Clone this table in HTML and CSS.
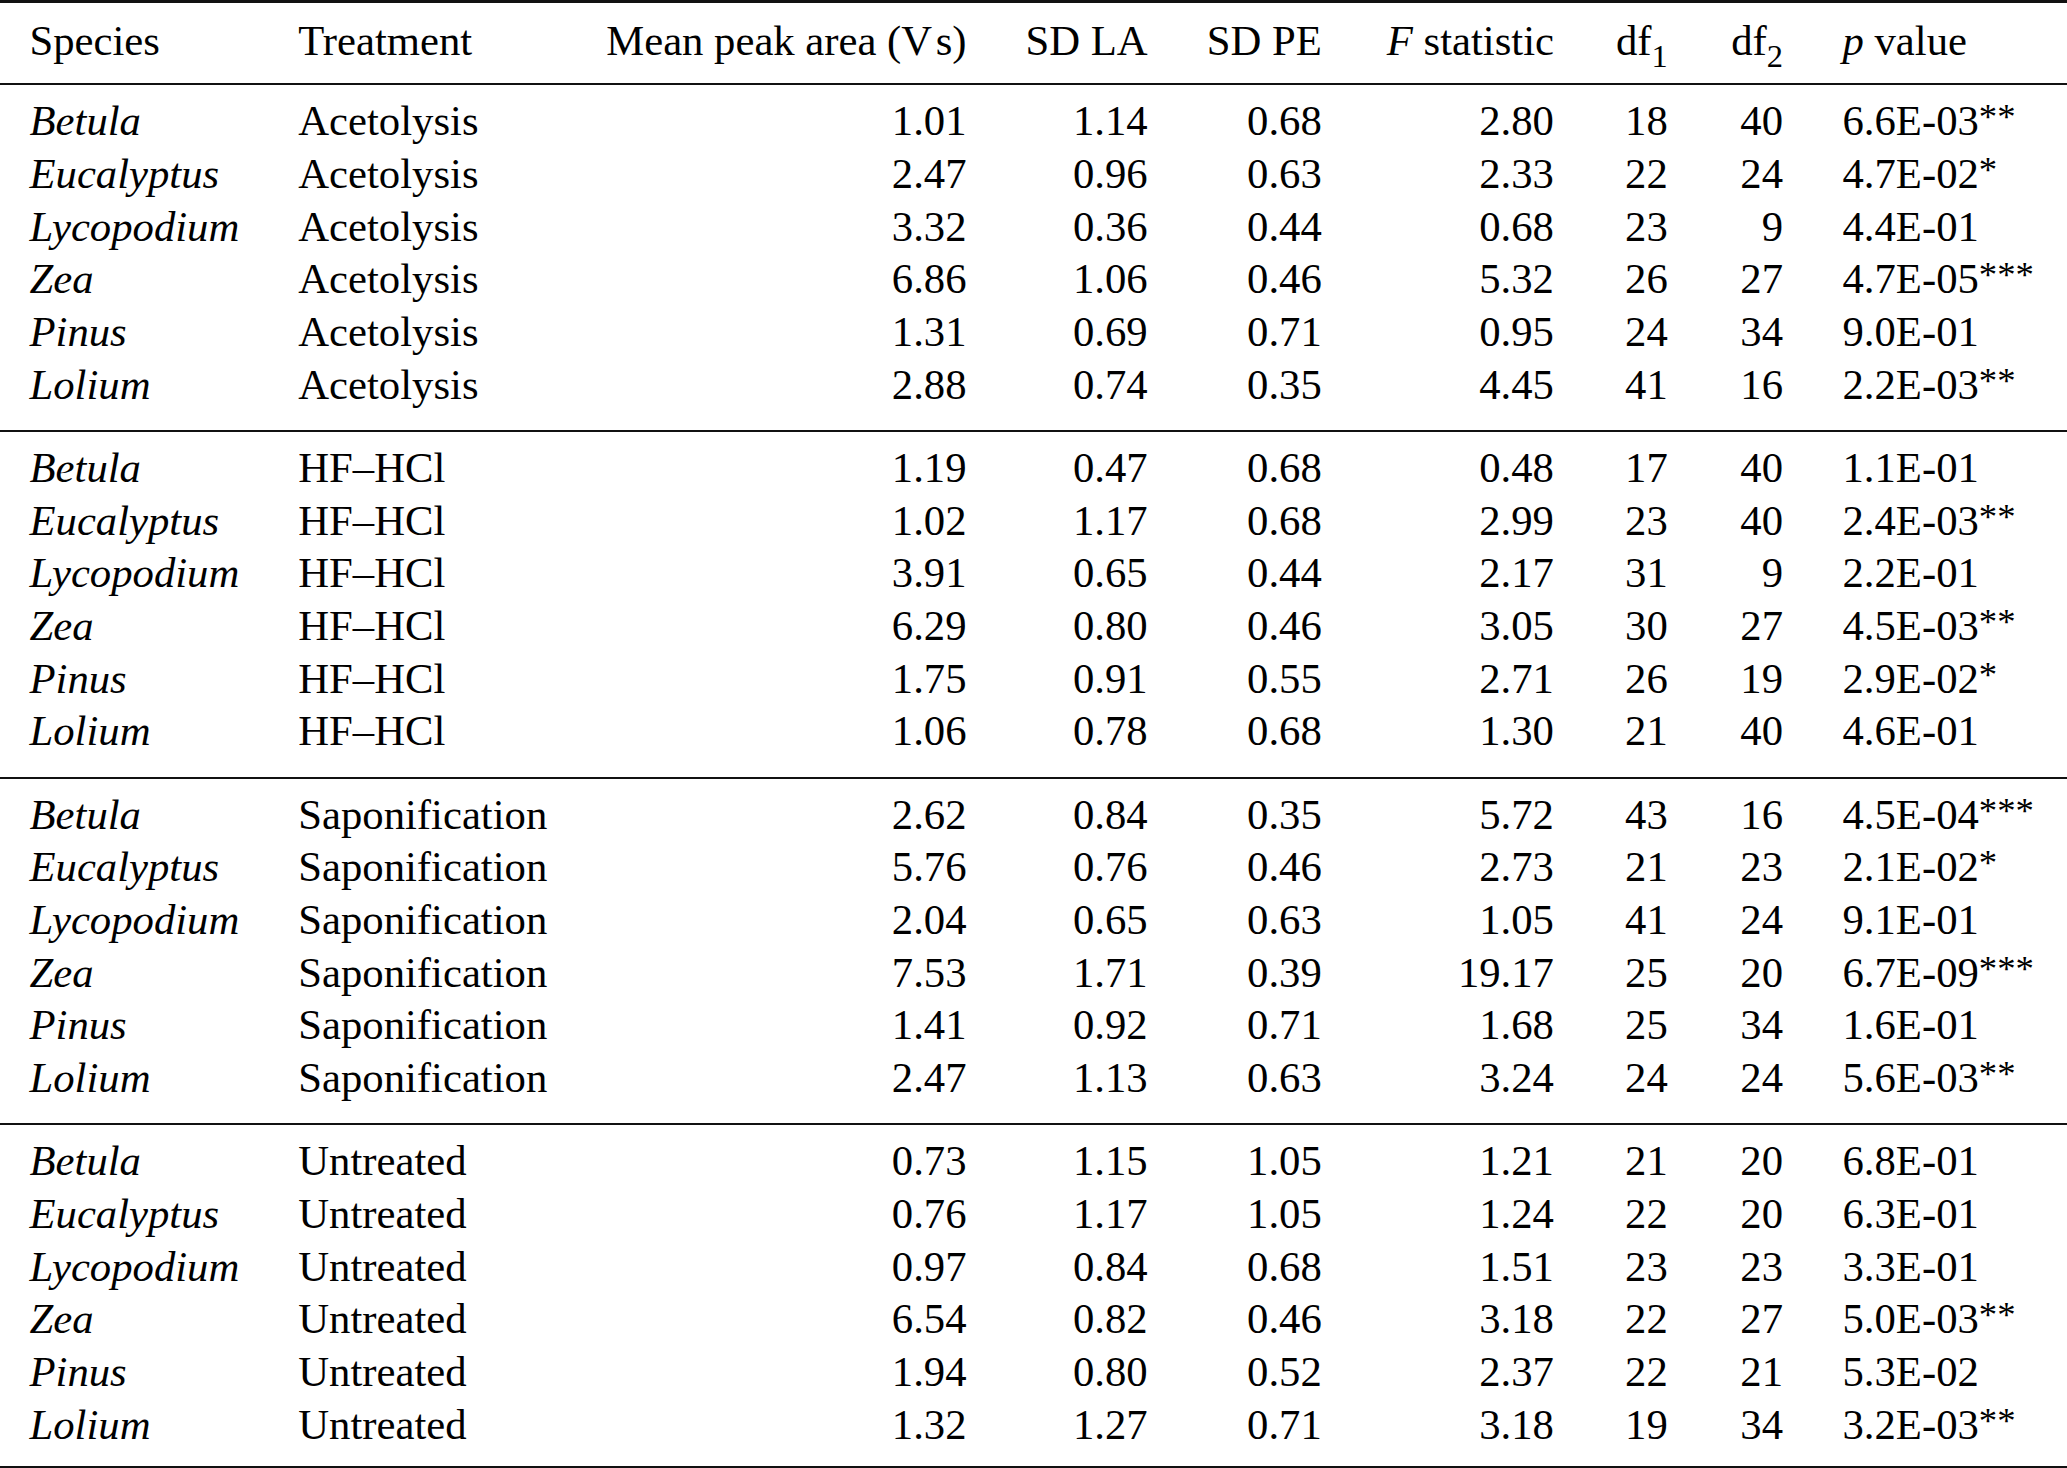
FILE: index.html
```html
<!DOCTYPE html>
<html lang="en">
<head>
<meta charset="utf-8">
<title>Peak area statistics</title>
<link rel="stylesheet" href="styles.css">
</head>
<body>
<div class="sheet">
<table class="stats">
<thead>
<tr>
<th>Species</th><th>Treatment</th><th>Mean peak area (<span class="vs">V&#8202;s</span>)</th><th>SD LA</th><th>SD PE</th><th><i>F</i> statistic</th><th>df<sub class="ix">1</sub></th><th>df<sub class="ix">2</sub></th><th class="pv"><i>p</i> value</th>
</tr>
</thead>
<tbody>
<tr><td>Betula</td><td>Acetolysis</td><td>1.01</td><td>1.14</td><td>0.68</td><td>2.80</td><td>18</td><td>40</td><td>6.6E-03<sup class="st">**</sup></td></tr>
<tr><td>Eucalyptus</td><td>Acetolysis</td><td>2.47</td><td>0.96</td><td>0.63</td><td>2.33</td><td>22</td><td>24</td><td>4.7E-02<sup class="st">*</sup></td></tr>
<tr><td>Lycopodium</td><td>Acetolysis</td><td>3.32</td><td>0.36</td><td>0.44</td><td>0.68</td><td>23</td><td>9</td><td>4.4E-01</td></tr>
<tr><td>Zea</td><td>Acetolysis</td><td>6.86</td><td>1.06</td><td>0.46</td><td>5.32</td><td>26</td><td>27</td><td>4.7E-05<sup class="st">***</sup></td></tr>
<tr><td>Pinus</td><td>Acetolysis</td><td>1.31</td><td>0.69</td><td>0.71</td><td>0.95</td><td>24</td><td>34</td><td>9.0E-01</td></tr>
<tr><td>Lolium</td><td>Acetolysis</td><td>2.88</td><td>0.74</td><td>0.35</td><td>4.45</td><td>41</td><td>16</td><td>2.2E-03<sup class="st">**</sup></td></tr>
</tbody>
<tbody>
<tr><td>Betula</td><td>HF–HCl</td><td>1.19</td><td>0.47</td><td>0.68</td><td>0.48</td><td>17</td><td>40</td><td>1.1E-01</td></tr>
<tr><td>Eucalyptus</td><td>HF–HCl</td><td>1.02</td><td>1.17</td><td>0.68</td><td>2.99</td><td>23</td><td>40</td><td>2.4E-03<sup class="st">**</sup></td></tr>
<tr><td>Lycopodium</td><td>HF–HCl</td><td>3.91</td><td>0.65</td><td>0.44</td><td>2.17</td><td>31</td><td>9</td><td>2.2E-01</td></tr>
<tr><td>Zea</td><td>HF–HCl</td><td>6.29</td><td>0.80</td><td>0.46</td><td>3.05</td><td>30</td><td>27</td><td>4.5E-03<sup class="st">**</sup></td></tr>
<tr><td>Pinus</td><td>HF–HCl</td><td>1.75</td><td>0.91</td><td>0.55</td><td>2.71</td><td>26</td><td>19</td><td>2.9E-02<sup class="st">*</sup></td></tr>
<tr><td>Lolium</td><td>HF–HCl</td><td>1.06</td><td>0.78</td><td>0.68</td><td>1.30</td><td>21</td><td>40</td><td>4.6E-01</td></tr>
</tbody>
<tbody>
<tr><td>Betula</td><td>Saponification</td><td>2.62</td><td>0.84</td><td>0.35</td><td>5.72</td><td>43</td><td>16</td><td>4.5E-04<sup class="st">***</sup></td></tr>
<tr><td>Eucalyptus</td><td>Saponification</td><td>5.76</td><td>0.76</td><td>0.46</td><td>2.73</td><td>21</td><td>23</td><td>2.1E-02<sup class="st">*</sup></td></tr>
<tr><td>Lycopodium</td><td>Saponification</td><td>2.04</td><td>0.65</td><td>0.63</td><td>1.05</td><td>41</td><td>24</td><td>9.1E-01</td></tr>
<tr><td>Zea</td><td>Saponification</td><td>7.53</td><td>1.71</td><td>0.39</td><td>19.17</td><td>25</td><td>20</td><td>6.7E-09<sup class="st">***</sup></td></tr>
<tr><td>Pinus</td><td>Saponification</td><td>1.41</td><td>0.92</td><td>0.71</td><td>1.68</td><td>25</td><td>34</td><td>1.6E-01</td></tr>
<tr><td>Lolium</td><td>Saponification</td><td>2.47</td><td>1.13</td><td>0.63</td><td>3.24</td><td>24</td><td>24</td><td>5.6E-03<sup class="st">**</sup></td></tr>
</tbody>
<tbody>
<tr><td>Betula</td><td>Untreated</td><td>0.73</td><td>1.15</td><td>1.05</td><td>1.21</td><td>21</td><td>20</td><td>6.8E-01</td></tr>
<tr><td>Eucalyptus</td><td>Untreated</td><td>0.76</td><td>1.17</td><td>1.05</td><td>1.24</td><td>22</td><td>20</td><td>6.3E-01</td></tr>
<tr><td>Lycopodium</td><td>Untreated</td><td>0.97</td><td>0.84</td><td>0.68</td><td>1.51</td><td>23</td><td>23</td><td>3.3E-01</td></tr>
<tr><td>Zea</td><td>Untreated</td><td>6.54</td><td>0.82</td><td>0.46</td><td>3.18</td><td>22</td><td>27</td><td>5.0E-03<sup class="st">**</sup></td></tr>
<tr><td>Pinus</td><td>Untreated</td><td>1.94</td><td>0.80</td><td>0.52</td><td>2.37</td><td>22</td><td>21</td><td>5.3E-02</td></tr>
<tr><td>Lolium</td><td>Untreated</td><td>1.32</td><td>1.27</td><td>0.71</td><td>3.18</td><td>19</td><td>34</td><td>3.2E-03<sup class="st">**</sup></td></tr>
</tbody>
</table>
</div>
</body>
</html>
```
FILE: styles.css
```css
html, body {
  margin: 0;
  padding: 0;
  background: #ffffff;
}

.sheet {
  width: 2067px;
}

.stats {
  width: 100%;
  border-collapse: collapse;
  font-family: "Liberation Serif", "Times New Roman", serif;
  font-size: 42.7px;
  color: #000;
  border-top: 3px solid #111;
  border-bottom: 3px solid #111;
}

.stats th,
.stats td {
  font-weight: normal;
  line-height: 52.7px;
  padding: 0 29.5px;
  white-space: nowrap;
  text-align: right;
  vertical-align: middle;
}

.stats th:nth-child(1),
.stats th:nth-child(2),
.stats td:nth-child(1),
.stats td:nth-child(2),
.stats th:last-child,
.stats td:last-child {
  text-align: left;
}

/* column spacing tweaks to follow the typeset original */
.stats th:nth-child(6),
.stats td:nth-child(6) {
  padding-left: 35.5px;
}

.stats th:nth-child(7),
.stats td:nth-child(7) {
  padding-left: 32.5px;
}

.stats th:nth-child(8),
.stats td:nth-child(8) {
  padding-left: 34px;
}

.stats th:last-child,
.stats td:last-child {
  padding-left: 30px;
}

.stats td:nth-child(1) {
  font-style: italic;
}

.stats .pv,
.stats td:last-child {
  width: 100%;
}

.stats thead th {
  padding-top: 12px;
  padding-bottom: 15.5px;
  border-bottom: 2px solid #111;
}

.stats tbody + tbody tr:first-child td {
  border-top: 2px solid #111;
}

.stats tbody tr:first-child td {
  padding-top: 10px;
}

.stats tbody tr:last-child td {
  padding-bottom: 18.5px;
}

.stats tbody:last-child tr:last-child td {
  padding-bottom: 14px;
}

.vs {
  font-kerning: none;
}

.ix {
  font-size: 0.76em;
  line-height: 0;
  vertical-align: -0.36em;
}

.st {
  font-size: 0.86em;
  line-height: 0;
  vertical-align: 0.17em;
}
```
